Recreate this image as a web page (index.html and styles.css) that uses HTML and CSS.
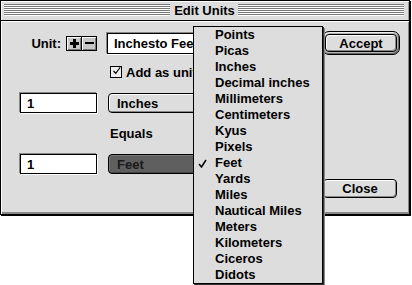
FILE: index.html
```html
<!DOCTYPE html>
<html>
<head>
<meta charset="utf-8">
<link rel="stylesheet" href="styles.css">
</head>
<body>
<div class="window">
  <div class="titlebar">
    <span class="stripes"></span>
    <span class="title">Edit Units</span>
    <span class="stripes"></span>
  </div>
  <div class="content">
    <div class="unit-label">
      <span class="label">Unit:</span>
      <span class="pm"><svg width="10" height="10" viewBox="0 0 10 10"><rect x="4" y="1" width="3" height="9" fill="#000"/><rect x="1" y="4" width="9" height="3" fill="#000"/></svg></span>
      <span class="pm minus"><svg width="10" height="10" viewBox="0 0 10 10"><rect x="1" y="4" width="9" height="2" fill="#000"/></svg></span>
    </div>
    <div class="field name">Inchesto Feet</div>
    <div class="btn-default"><span class="btn">Accept</span></div>
    <div class="check"><span class="box"><svg width="12" height="12" viewBox="0 0 12 12"><path d="M2 6 L5 9 L11 1" fill="none" stroke="#000" stroke-width="1.6"/></svg></span><span>Add as unit</span></div>
    <div class="field num row3">1</div>
    <div class="popup row3">Inches</div>
    <div class="equals">Equals</div>
    <div class="field num row5">1</div>
    <div class="popup selected row5">Feet</div>
    <div class="btn close">Close</div>
  </div>
  <ul class="menu">
    <li><span class="mark"></span>Points</li>
    <li><span class="mark"></span>Picas</li>
    <li><span class="mark"></span>Inches</li>
    <li><span class="mark"></span>Decimal inches</li>
    <li><span class="mark"></span>Millimeters</li>
    <li><span class="mark"></span>Centimeters</li>
    <li><span class="mark"></span>Kyus</li>
    <li><span class="mark"></span>Pixels</li>
    <li><span class="mark"><svg width="9" height="9" viewBox="0 0 9 9"><path d="M1 5 L3.5 8 L8 1" fill="none" stroke="#000" stroke-width="1.5"/></svg></span>Feet</li>
    <li><span class="mark"></span>Yards</li>
    <li><span class="mark"></span>Miles</li>
    <li><span class="mark"></span>Nautical Miles</li>
    <li><span class="mark"></span>Meters</li>
    <li><span class="mark"></span>Kilometers</li>
    <li><span class="mark"></span>Ciceros</li>
    <li><span class="mark"></span>Didots</li>
  </ul>
</div>
</body>
</html>
```
FILE: styles.css
```css
* { box-sizing: border-box; }
html, body { min-height: 285px; }
body {
  margin: 0;
  background: #fff;
  font-family: "Liberation Sans", Arial, sans-serif;
  font-weight: bold;
  font-size: 13px;
  color: #000;
}
.window {
  position: relative;
  width: 410px;
  height: 215px;
  border: 1px solid #000;
  box-shadow: 1px 1px 0 #000;
  background: #dddddd;
}
.titlebar {
  height: 20px;
  display: flex;
  align-items: flex-start;
  padding: 3px 5px 0 3px;
  border-bottom: 1px solid #000;
  background: #dddddd;
  box-shadow: inset 1px 1px 0 #fff, inset -1px 0 0 #999;
}
.stripes {
  flex: 1;
  height: 12px;
  background: repeating-linear-gradient(to bottom, #777 0 1px, #fff 1px 2px);
}
.title {
  padding: 0 3px 0 4px;
  line-height: 13px;
}
.content {
  display: grid;
  grid-template-columns: 77px 205px 78px;
  column-gap: 10px;
  grid-template-rows: 24px 23px 35px 28px 33px 24px;
  padding: 10px 0 0 19px;
  height: 193px;
  box-shadow: inset 1px 1px 0 #fff, inset -1px -2px 0 #888;
}
.unit-label {
  grid-column: 1;
  grid-row: 1;
  display: flex;
  align-items: center;
  justify-content: flex-end;
}
.label { margin-right: 5px; }
.pm {
  width: 16px;
  height: 15px;
  border: 1px solid #000;
  background: #c8c8c8;
  box-shadow: inset 1px 1px 0 #fff, inset -1px -1px 0 #777;
  display: flex;
  align-items: center;
  justify-content: center;
}
.pm.minus { margin-left: -1px; }
.field {
  background: #fff;
  border: 1px solid #000;
  box-shadow: -1px -1px 0 #888, 1px 1px 0 #fff;
  padding-left: 6px;
  display: flex;
  align-items: center;
}
.field.name {
  grid-column: 2;
  grid-row: 1;
  align-self: center;
  height: 21px;
  width: 190px;
}
.field.num {
  grid-column: 1;
  height: 20px;
}
.row3 { grid-row: 3; align-self: end; }
.row5 { grid-row: 5; align-self: end; }
.btn-default {
  grid-column: 3;
  grid-row: 1;
  border: 1px solid #000;
  border-radius: 7px;
  background: #b4b4b4;
  box-shadow: inset 1px 1px 0 #eee, inset -1px -1px 0 #666;
  padding: 2px;
  display: flex;
}
.btn {
  flex: 1;
  display: flex;
  align-items: center;
  justify-content: center;
  border: 1px solid #000;
  border-radius: 4px;
  background: #dddddd;
  box-shadow: inset 1px 1px 0 #fff, inset -1px -1px 0 #888;
}
.btn.close {
  grid-column: 3;
  grid-row: 6;
  align-self: end;
  height: 19px;
  margin: 0 3px 0 1px;
}
.check {
  grid-column: 2;
  grid-row: 2;
  align-self: end;
  display: flex;
  align-items: center;
  margin-left: 3px;
  height: 12px;
}
.box {
  width: 12px;
  height: 12px;
  border: 1px solid #000;
  background: #eee;
  margin-right: 4px;
  display: flex;
  align-items: center;
  justify-content: center;
}
.box svg { margin-top: -2px; margin-left: 1px; }
.popup {
  grid-column: 2;
  margin-left: 1px;
  height: 20px;
  width: 195px;
  border: 1px solid #000;
  border-radius: 4px 0 0 4px;
  background: #dddddd;
  box-shadow: inset 1px 1px 0 #fff, inset -1px -1px 0 #888;
  padding-left: 8px;
  display: flex;
  align-items: center;
}
.popup.selected {
  background: #5f5f5f;
  color: #1a1a1a;
  box-shadow: inset 1px 1px 0 #777, inset -1px -1px 0 #444;
}
.equals {
  grid-column: 2;
  grid-row: 4;
  align-self: end;
  margin-left: 3px;
  line-height: 14px;
}
.menu {
  position: absolute;
  left: 192px;
  top: 25px;
  width: 130px;
  margin: 0;
  padding: 0;
  list-style: none;
  border: 1px solid #000;
  background: #dddddd;
  box-shadow: 1px 1px 0 #333, 2px 2px 0 #888;
}
.menu li {
  display: flex;
  align-items: center;
  height: 16px;
  line-height: 16px;
}
.mark {
  width: 21px;
  flex: none;
  display: flex;
  padding-left: 4px;
}
```
